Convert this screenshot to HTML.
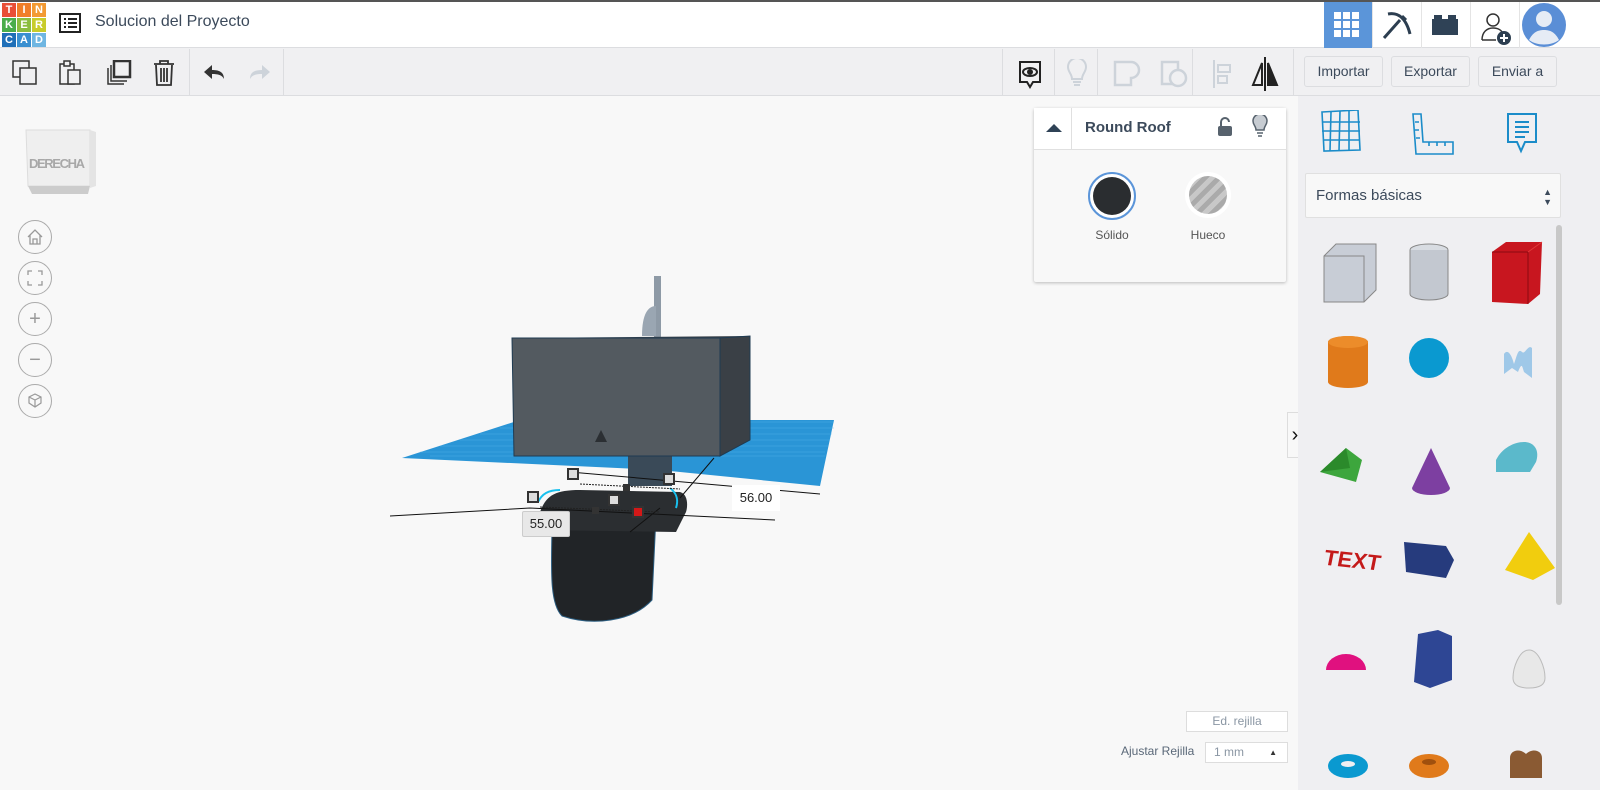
<!DOCTYPE html>
<html><head><meta charset="utf-8"><style>
*{box-sizing:border-box;margin:0;padding:0}
body{width:1600px;height:790px;overflow:hidden;background:#f8f8f8;font-family:"Liberation Sans",sans-serif;position:relative;color:#3c4a5b}
.abs{position:absolute}
#top{left:0;top:0;width:1600px;height:48px;background:#fff;border-top:2px solid #555;border-bottom:1px solid #dcdde0}
#tb{left:0;top:48px;width:1600px;height:48px;background:#f0f0f2;border-bottom:1px solid #dcdde0}
.logo div{position:absolute;width:14px;height:14px;color:#fff;font-size:11px;font-weight:bold;text-align:center;line-height:14px}
.btn{position:absolute;top:56px;height:31px;border:1px solid #dcdde0;border-radius:3px;background:#f0f0f2;font-size:14px;color:#3c4a5b;text-align:center;line-height:29px}
.sep{position:absolute;top:49px;width:1px;height:46px;background:#dcdde0}
#rp{left:1298px;top:96px;width:302px;height:694px;background:#efeff2}
.circ{position:absolute;left:18px;width:34px;height:34px;border:1px solid #aaa;border-radius:50%;color:#999;text-align:center;line-height:32px;font-size:20px;background:#f8f8f8}
</style></head><body>
<div id="top" class="abs"></div>
<div class="abs logo" style="left:2px;top:3px;width:44px;height:44px">
<div style="left:0;top:0;background:#e94f37">T</div><div style="left:15px;top:0;background:#f07e29">I</div><div style="left:30px;top:0;background:#f39a33">N</div>
<div style="left:0;top:15px;background:#4aad4b">K</div><div style="left:15px;top:15px;background:#8bbd3f">E</div><div style="left:30px;top:15px;background:#c8cc2b">R</div>
<div style="left:0;top:30px;background:#1f6fb8">C</div><div style="left:15px;top:30px;background:#3a8fd0">A</div><div style="left:30px;top:30px;background:#6fb6e2">D</div>
</div>
<svg class="abs" style="left:59px;top:13px" width="22" height="20"><rect x="1" y="1" width="20" height="18" fill="none" stroke="#222" stroke-width="2"/><path d="M5 6h2M9 6h9M5 10h2M9 10h9M5 14h2M9 14h9" stroke="#222" stroke-width="2"/></svg>
<div class="abs" style="left:95px;top:13px;font-size:16px;color:#3c4a5b">Solucion del Proyecto</div>
<div class="abs" style="left:1324px;top:2px;width:48px;height:46px;background:#5b95d9"></div>
<svg class="abs" style="left:1334px;top:12px" width="26" height="26" fill="#fff"><rect x="0" y="0" width="7" height="7"/><rect x="9" y="0" width="7" height="7"/><rect x="18" y="0" width="7" height="7"/><rect x="0" y="9" width="7" height="7"/><rect x="9" y="9" width="7" height="7"/><rect x="18" y="9" width="7" height="7"/><rect x="0" y="18" width="7" height="7"/><rect x="9" y="18" width="7" height="7"/><rect x="18" y="18" width="7" height="7"/></svg>
<svg class="abs" style="left:1380px;top:10px" width="32" height="30"><path d="M4 28L20 10" stroke="#2c3e50" stroke-width="3"/><path d="M8 4c10-2 18 4 22 20M22 6l4 4" stroke="#2c3e50" stroke-width="3" fill="none"/></svg>
<div class="abs" style="left:1372px;top:2px;width:1px;height:46px;background:#e4e4e4"></div>
<div class="abs" style="left:1421px;top:2px;width:1px;height:46px;background:#e4e4e4"></div>
<div class="abs" style="left:1470px;top:2px;width:1px;height:46px;background:#e4e4e4"></div>
<div class="abs" style="left:1519px;top:2px;width:1px;height:46px;background:#e4e4e4"></div>
<svg class="abs" style="left:1432px;top:15px" width="26" height="20" fill="#2f4256"><rect x="0" y="4" width="26" height="16"/><rect x="2" y="0" width="8" height="6"/><rect x="16" y="0" width="8" height="6"/></svg>
<svg class="abs" style="left:1480px;top:10px" width="36" height="36"><circle cx="13" cy="10" r="6" fill="none" stroke="#333" stroke-width="1.5"/><path d="M2 30c0-8 5-12 11-12s9 3 10 6M2 30h14" fill="none" stroke="#333" stroke-width="1.5"/><circle cx="24" cy="28" r="7" fill="#2c3e50"/><path d="M24 24v8M20 28h8" stroke="#fff" stroke-width="2"/></svg>
<svg class="abs" style="left:1521px;top:2px" width="46" height="46"><circle cx="23" cy="23" r="22" fill="#5a8ed6"/><circle cx="23" cy="17" r="8" fill="#e6ecf5"/><path d="M8 38c4-8 9-10 15-10s11 2 15 10c-8 6-22 6-30 0z" fill="#e6ecf5"/></svg>

<div id="tb" class="abs"></div>
<svg class="abs" style="left:12px;top:60px" width="26" height="26" fill="none" stroke="#333" stroke-width="1.5"><rect x="1" y="1" width="16" height="16"/><rect x="8" y="8" width="16" height="16" fill="#f0f0f2"/></svg>
<svg class="abs" style="left:58px;top:60px" width="26" height="26" fill="none" stroke="#333" stroke-width="1.5"><rect x="2" y="4" width="14" height="20"/><rect x="6" y="1" width="6" height="5" fill="#f0f0f2"/><rect x="10" y="10" width="12" height="14" fill="#f0f0f2"/></svg>
<svg class="abs" style="left:105px;top:60px" width="28" height="26" fill="none" stroke="#333" stroke-width="1.5"><path d="M3 8v16h16M6 5v16h16"/><rect x="9" y="1" width="16" height="16" stroke-width="2.5" fill="#f0f0f2"/></svg>
<svg class="abs" style="left:153px;top:59px" width="22" height="28" fill="none" stroke="#333" stroke-width="1.8"><path d="M1 5h20M7 5V2h8v3M3 6l1 20h14l1-20M8 9v14M11 9v14M14 9v14"/></svg>
<div class="sep" style="left:189px"></div>
<svg class="abs" style="left:202px;top:63px" width="24" height="18"><path d="M22 16c0-7-5-9-12-9V2L2 9l8 7v-5c6 0 10 1 12 5z" fill="#333"/></svg>
<svg class="abs" style="left:248px;top:63px" width="24" height="18"><path d="M2 16c0-7 5-9 12-9V2l8 7-8 7v-5c-6 0-10 1-12 5z" fill="#cdd3da"/></svg>
<div class="sep" style="left:283px"></div>
<div class="sep" style="left:1002px"></div>
<svg class="abs" style="left:1017px;top:60px" width="26" height="30" fill="none" stroke="#222" stroke-width="2"><path d="M3 2h20v20h-7l-3 5-3-5H3z"/><ellipse cx="13" cy="12" rx="7" ry="4"/><circle cx="13" cy="12" r="2" fill="#222"/></svg>
<div class="sep" style="left:1054px"></div>
<svg class="abs" style="left:1066px;top:59px" width="22" height="30" fill="none" stroke="#cdd3da" stroke-width="2"><path d="M6 20c0-5-4-7-4-12a9 9 0 0118 0c0 5-4 7-4 12zM7 23h8M8 26h6"/></svg>
<div class="sep" style="left:1097px"></div>
<svg class="abs" style="left:1113px;top:60px" width="30" height="28" fill="none" stroke="#cdd3da" stroke-width="2.5"><path d="M2 2h16a8 8 0 010 16v7H2z"/></svg>
<svg class="abs" style="left:1160px;top:60px" width="30" height="28" fill="none" stroke="#cdd3da" stroke-width="2.5"><rect x="2" y="2" width="16" height="22"/><circle cx="18" cy="18" r="8" fill="#f0f0f2"/></svg>
<div class="sep" style="left:1192px"></div>
<svg class="abs" style="left:1212px;top:60px" width="22" height="28" fill="none" stroke="#cdd3da" stroke-width="2"><path d="M2 0v28"/><rect x="6" y="5" width="12" height="7"/><rect x="6" y="16" width="9" height="7"/></svg>
<svg class="abs" style="left:1250px;top:57px" width="30" height="34" fill="none" stroke="#222" stroke-width="2"><path d="M15 0v34"/><path d="M12 6L3 28h9z"/><path d="M18 6l9 22h-9z" fill="#222"/></svg>
<div class="sep" style="left:1293px"></div>
<div class="btn" style="left:1304px;width:79px">Importar</div>
<div class="btn" style="left:1391px;width:79px">Exportar</div>
<div class="btn" style="left:1478px;width:79px">Enviar a</div>

<!-- view cube -->
<svg class="abs" style="left:24px;top:128px" width="74" height="70"><path d="M2 2h64v56H4z" fill="#efefef" stroke="#ddd"/><path d="M66 2l6 2v54l-6 2z" fill="#e4e4e4"/><path d="M4 58h62l-2 8H8z" fill="#ccc"/><text x="5" y="40" font-family="Liberation Sans" font-size="13" font-weight="bold" fill="#a8a8a8" textLength="56">DERECHA</text></svg>
<div class="circ" style="top:220px"><svg width="16" height="16" style="margin-top:8px" fill="none" stroke="#999" stroke-width="1.3"><path d="M1 8l7-7 7 7M3 6v9h10V6M6 15v-5h4v5"/></svg></div>
<div class="circ" style="top:261px"><svg width="16" height="16" style="margin-top:8px" fill="none" stroke="#999" stroke-width="1.3"><path d="M1 5V1h4M11 1h4v4M15 11v4h-4M5 15H1v-4"/></svg></div>
<div class="circ" style="top:302px">+</div>
<div class="circ" style="top:343px">−</div>
<div class="circ" style="top:384px"><svg width="16" height="16" style="margin-top:8px" fill="none" stroke="#999" stroke-width="1.2"><path d="M8 1l6 3v6l-6 4-6-4V4zM2 4l6 3 6-3M8 7v7"/></svg></div>

<!-- scene -->
<svg class="abs" style="left:390px;top:270px" width="460" height="360">
<path d="M12 188L130 150 444 150 430 216 270 200z" fill="#2a95d6"/>
<g stroke="#5cb8ee" stroke-width="0.5" opacity="0.7">
<path d="M30 182h405M50 176h388M70 170h370M90 164h352M110 158h334M130 152h314M40 186h395"/>
</g>
<rect x="238" y="186" width="44" height="30" fill="#3a4a58"/>
<path d="M264 6h7v62h-7z" fill="#8e9aa6"/>
<path d="M252 66c0-22 6-30 14-30v30z" fill="#9aa6b2"/>
<path d="M124 68l236-2v8l-236 2z" fill="#3a4148"/>
<path d="M122 68h208v118H124z" fill="#535a60" stroke="#1f3b52"/>
<path d="M330 68l30-2v104l-30 16z" fill="#3a4046" stroke="#1f3b52"/>
<polygon points="211,160 205,172 217,172" fill="#2b2f33"/>
<path d="M162 250c0 40-4 82 10 96 30 10 70 6 90-16l4-84z" fill="#212427" stroke="#2b5d80"/>
<path d="M150 242c6-16 14-22 40-22l100 2c8 2 8 14 6 20l-10 20-140-2z" fill="#2b2e31"/>
<path d="M148 232c4-8 10-12 22-12" stroke="#19c0ee" stroke-width="2" fill="none"/>
<path d="M280 218c8 6 8 14 6 20" stroke="#19c0ee" stroke-width="2" fill="none"/>
<path d="M-35 248l175-10M140 238l245 12M180 202l250 22M290 228l34-40M240 262l30-24" stroke="#111" stroke-width="1" fill="none"/>
<path d="M190 214l100 5M150 237l120 5" stroke="#222" stroke-dasharray="2 1"/>
<rect x="138" y="222" width="10" height="10" fill="#ddd" stroke="#333" stroke-width="2"/>
<rect x="178" y="199" width="10" height="10" fill="#ddd" stroke="#333" stroke-width="2"/>
<rect x="274" y="204" width="10" height="10" fill="#ddd" stroke="#333" stroke-width="2"/>
<rect x="219" y="225" width="10" height="10" fill="#ddd" stroke="#333" stroke-width="2"/>
<rect x="243" y="237" width="10" height="10" fill="#d31818" stroke="#333" stroke-width="2"/>
<rect x="233" y="214" width="7" height="7" fill="#333"/>
<rect x="202" y="237" width="7" height="7" fill="#333"/>
</svg>
<div class="abs" style="left:732px;top:485px;width:48px;height:26px;background:#fff;font-size:13px;line-height:26px;text-align:center;color:#222">56.00</div>
<div class="abs" style="left:522px;top:511px;width:48px;height:26px;background:#e8e8e8;border:1px solid #ccc;border-radius:2px;font-size:13px;line-height:24px;text-align:center;color:#222">55.00</div>

<!-- inspector -->
<div class="abs" style="left:1034px;top:108px;width:252px;height:174px;background:#f8f8f8;box-shadow:0 1px 3px rgba(0,0,0,.25);border-radius:2px">
<div style="height:42px;background:#fff;border-bottom:1px solid #e0e0e0;position:relative">
<div style="position:absolute;left:37px;top:0;width:1px;height:41px;background:#e0e0e0"></div>
<svg style="position:absolute;left:12px;top:15px" width="16" height="10"><path d="M0 9L8 1l8 8z" fill="#2f4256"/></svg>
<div style="position:absolute;left:51px;top:11px;font-size:15px;font-weight:bold;color:#3c4a5b">Round Roof</div>
<svg style="position:absolute;left:184px;top:9px" width="16" height="20" fill="#57626d"><rect x="0" y="9" width="14" height="10" rx="2"/><path d="M3 9V5a4 4 0 018 0" fill="none" stroke="#57626d" stroke-width="2"/></svg>
<svg style="position:absolute;left:218px;top:7px" width="16" height="22"><path d="M4 15c0-4-3-5-3-9a7 7 0 0114 0c0 4-3 5-3 9z" fill="#c7ccd2" stroke="#57626d" stroke-width="1.5"/><path d="M5 18h6M6 21h4" stroke="#57626d" stroke-width="1.5"/></svg>
</div>
<div style="position:absolute;left:54px;top:64px;width:48px;height:48px;border:2px solid #5b95d9;border-radius:50%;background:#fff"><div style="margin:3px;width:38px;height:38px;border-radius:50%;background:#2a2d30"></div></div>
<div style="position:absolute;left:151px;top:64px;width:46px;height:46px;border-radius:50%;background:#fff"><div style="margin:4px;width:38px;height:38px;border-radius:50%;background:repeating-linear-gradient(135deg,#aaa 0 5px,#c8c8c8 5px 10px)"></div></div>
<div style="position:absolute;left:50px;top:120px;width:56px;text-align:center;font-size:12px;color:#555">Sólido</div>
<div style="position:absolute;left:146px;top:120px;width:56px;text-align:center;font-size:12px;color:#555">Hueco</div>
</div>
<div class="abs" style="left:1287px;top:412px;width:16px;height:46px;background:#f8f8f8;border:1px solid #ddd;font-size:20px;line-height:44px;text-align:center;color:#111">›</div>
<div class="abs" style="left:1186px;top:711px;width:102px;height:21px;border:1px solid #ddd;background:#fff;font-size:12px;color:#8a96a3;text-align:center;line-height:19px">Ed. rejilla</div>
<div class="abs" style="left:1121px;top:744px;font-size:12px;color:#5a6878">Ajustar Rejilla</div>
<div class="abs" style="left:1205px;top:742px;width:83px;height:21px;border:1px solid #ddd;background:#fff;font-size:12px;color:#8a96a3;line-height:19px;padding-left:8px">1 mm<span style="position:absolute;right:10px;top:0;font-size:8px;color:#333">▲</span></div>

<!-- right panel -->
<div id="rp" class="abs"></div>
<svg class="abs" style="left:1320px;top:110px" width="44" height="46" fill="none" stroke="#1b8cc9" stroke-width="1.6"><path d="M2 2l36-2 2 40-36 1z"/><path d="M11 2l-1 39M20 1l-1 40M29 1v40M2 12h38M2 21h38M3 30h37"/></svg>
<svg class="abs" style="left:1411px;top:112px" width="44" height="44" fill="none" stroke="#1b8cc9" stroke-width="1.6"><path d="M2 2h8l2 28h30v12H5z"/><path d="M4 10h4M4 18h4M5 26h4M18 30v4M26 30v4M34 30v4"/></svg>
<svg class="abs" style="left:1505px;top:112px" width="34" height="42" fill="none" stroke="#1b8cc9" stroke-width="2"><path d="M3 2h28v28H20l-4 9-4-9H3z"/><path d="M10 10h14M10 15h14M10 20h14M10 25h10"/></svg>
<div class="abs" style="left:1305px;top:173px;width:256px;height:45px;background:#f8f8f8;border:1px solid #e0e0e0;border-radius:2px;font-size:15px;color:#3c4a5b;line-height:43px;padding-left:10px">Formas básicas<span style="position:absolute;right:8px;top:0;font-size:9px;line-height:10px;padding-top:13px">▲<br>▼</span></div>
<div class="abs" style="left:1556px;top:225px;width:6px;height:380px;background:#c8c8c8;border-radius:3px"></div>
<svg class="abs" style="left:1298px;top:230px" width="258" height="560">
<path d="M26 26l12-12h40v46l-12 12H26z" fill="#c8cdd6" stroke="#888"/><path d="M26 26h40v46" fill="none" stroke="#888"/>
<ellipse cx="131" cy="20" rx="19" ry="6" fill="#d8dce2" stroke="#888"/><path d="M112 20v44a19 6 0 0038 0V20" fill="#c3c8d0" stroke="#888"/>
<path d="M194 22l14-10h36l-2 52-12 10-36-2z" fill="#c8161f"/><path d="M194 22h36v52" fill="none" stroke="#8a0a10"/><path d="M230 22l14-10" stroke="#e03a3a"/>
<path d="M30 112a20 6 0 0140 0v40a20 6 0 01-40 0z" fill="#e07a1b"/><ellipse cx="50" cy="112" rx="20" ry="6" fill="#ec8c2a"/>
<circle cx="131" cy="128" r="20" fill="#0a99d0"/>
<path d="M206 124c4-6 8 2 10 10 3-8 4-16 8-12 3 3 6-8 10-4v30l-8-6c-2-6-2-10-6 0l-6-4-8 6z" fill="#9fc8e8"/>
<path d="M22 242l26-24 16 12-6 22z" fill="#3da63d"/><path d="M22 242l26-24 4 20z" fill="#2b8a2b"/>
<path d="M133 218l-19 40a19 7 0 0038 0z" fill="#7d3fa1"/>
<path d="M198 230c6-12 18-18 28-18 10 0 16 8 12 20l-6 10h-34z" fill="#5bb9cb"/>
<text x="26" y="337" font-family="Liberation Sans" font-size="22" font-weight="bold" font-style="italic" fill="#c41a1a" transform="skewY(6) translate(0,-5)">TEXT</text>
<path d="M106 312l42 4 8 14-8 18-40-6z" fill="#263b7d"/>
<path d="M231 302l-24 38 28 10 22-12z" fill="#f1cd0e"/>
<path d="M28 440a20 16 0 0140 0z" fill="#e0117f"/>
<path d="M120 404l20-4 14 6v44l-22 8-16-6z" fill="#2e4694"/>
<path d="M231 420c-10 0-16 18-16 28 0 8 8 10 16 10s16-2 16-10c0-10-6-28-16-28z" fill="#e8e8e8" stroke="#bbb"/>
<ellipse cx="50" cy="536" rx="20" ry="12" fill="#0a99d0"/><ellipse cx="50" cy="534" rx="7" ry="3" fill="#efeff2"/>
<ellipse cx="131" cy="536" rx="20" ry="12" fill="#e07a1b"/><ellipse cx="131" cy="532" rx="7" ry="3" fill="#a0500e"/>
<path d="M212 528c0-8 10-10 16-4 6-6 16-4 16 4v20h-32z" fill="#8a5a33"/>
</svg>
</body></html>
